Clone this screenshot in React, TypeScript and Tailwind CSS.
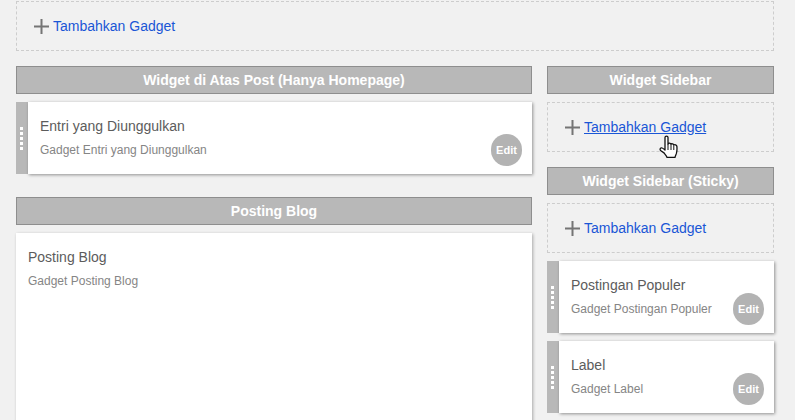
function AddGadget({ hovered }: { hovered?: boolean }) {
  return (
    <div className="relative h-[50px] border border-dashed border-[#cdcdcd] flex items-center pl-[17px]">
      <svg width="15" height="15" viewBox="0 0 15 15" className="shrink-0 mr-[4px]">
        <path d="M6.500 0h2v6.500H15v2H8.500V15h-2V8.500H0v-2h6.500z" fill="#757575" />
      </svg>
      <a className={`text-[14px] leading-4 text-[#1a56d6] ${hovered ? "underline" : ""}`}>Tambahkan Gadget</a>
      {hovered && <HandCursor />}
    </div>
  );
}

function HandCursor() {
  return (
    <svg width="20" height="26" viewBox="0 0 20 26" className="absolute left-[111px] top-[32px]">
      <path
        d="M6 2.600c0-2 3-2 3 0V9c.4-1 2.600-1.200 3 .3.500-.9 2.500-.7 2.800.7.7-.6 2.900-.4 3.100 1.400.2 2.500.1 5-.5 7-.5 1.500-1.200 2.500-1.400 4H8c-.3-1.500-1.800-3-3-4.500L1.500 15.500c-1-1.500 0-3 1.600-2.500 1 .3 2 1.200 2.900 2z"
        fill="#fff"
        stroke="#111"
        strokeWidth="1.300"
        strokeLinejoin="round"
      />
      <path d="M9 9v6M12 9.500V15M14.800 10.500V15" stroke="#111" strokeWidth="1" fill="none" />
    </svg>
  );
}

function SectionHeader({ title }: { title: string }) {
  return (
    <div className="h-7 bg-[#b8b8b8] border border-[#8e8e8e] flex items-center justify-center text-white font-bold text-[14px] leading-none">
      {title}
    </div>
  );
}

function Gadget({ title, subtitle }: { title: string; subtitle: string }) {
  return (
    <div className="h-[72px] flex">
      <div className="w-3 shrink-0 bg-[#b8b8b8] flex flex-col items-center justify-center gap-[2px] pr-px">
        <span className="w-[3px] h-[3px] bg-white" />
        <span className="w-[3px] h-[3px] bg-white" />
        <span className="w-[3px] h-[3px] bg-white" />
        <span className="w-[3px] h-[3px] bg-white" />
        <span className="w-[3px] h-[3px] bg-white" />
      </div>
      <div className="relative flex-1 bg-white pl-3 pt-4 shadow-[1px_1px_3px_rgba(0,0,0,0.4)]">
        <div className="text-[14px] leading-4 text-[#5c5c5c]">{title}</div>
        <div className="mt-2 text-[12px] leading-4 text-[#858585]">{subtitle}</div>
        <div className="absolute right-[10px] bottom-2 w-[31px] h-8 rounded-full bg-[#b3b3b3] text-white text-[11px] font-bold flex items-center justify-center">
          Edit
        </div>
      </div>
    </div>
  );
}

export default function App() {
  return (
    <div className="h-[420px] overflow-hidden bg-[#f1f1f1] px-[16px] pt-px font-['Liberation_Sans',Arial,sans-serif]">
      <div className="w-[758px]">
        <AddGadget />
      </div>
      <div className="mt-[15px] flex gap-[15px] w-[758px]">
        <div className="w-[516px] shrink-0">
          <SectionHeader title="Widget di Atas Post (Hanya Homepage)" />
          <div className="mt-2">
            <Gadget title="Entri yang Diunggulkan" subtitle="Gadget Entri yang Diunggulkan" />
          </div>
          <div className="mt-[23px]">
            <SectionHeader title="Posting Blog" />
          </div>
          <div className="mt-2 h-[300px] bg-white shadow-[1px_1px_3px_rgba(0,0,0,0.3)] pl-3 pt-4">
            <div className="text-[14px] leading-4 text-[#5c5c5c]">Posting Blog</div>
            <div className="mt-2 text-[12px] leading-4 text-[#858585]">Gadget Posting Blog</div>
          </div>
        </div>
        <div className="w-[227px] shrink-0">
          <SectionHeader title="Widget Sidebar" />
          <div className="mt-2">
            <AddGadget hovered />
          </div>
          <div className="mt-[15px]">
            <SectionHeader title="Widget Sidebar (Sticky)" />
          </div>
          <div className="mt-2">
            <AddGadget />
          </div>
          <div className="mt-2">
            <Gadget title="Postingan Populer" subtitle="Gadget Postingan Populer" />
          </div>
          <div className="mt-2">
            <Gadget title="Label" subtitle="Gadget Label" />
          </div>
        </div>
      </div>
    </div>
  );
}
